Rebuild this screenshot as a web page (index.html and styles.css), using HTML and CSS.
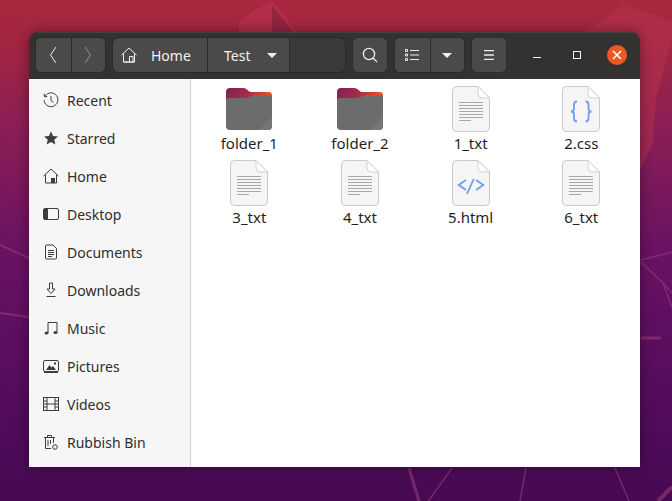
FILE: index.html
```html
<!DOCTYPE html>
<html lang="en">
<head>
  <meta charset="UTF-8" />
  <title>Test - Files</title>
  <link rel="stylesheet" href="styles.css">
</head>
<body>

  <svg class="wallpaper" viewBox="0 0 672 501" aria-hidden="true">
    <path d="M239 21 L272 0 L304 41 L239 41 Z" fill="#b8344e" opacity="0.55" />
    <path d="M272 6 L302 41 L272 41 Z" fill="#8a2040" opacity="0.7" />
    <path d="M574 39 L624 5 L672 21 L672 40 L656 97 L653 143 L640 170 L640 39 Z" fill="#b8344e" opacity="0.5" />
    <g fill="none" stroke="#a0407c" opacity="0.55">
      <path d="M641 260 L672 252 M641 262 L663 283 L672 293 M663 283 L672 307" stroke-width="1.500" />
      <path d="M641 338 L661 338" stroke-width="3" />
      <path d="M0 245 L29 258 M0 313 L29 317" stroke-width="2" />
      <path d="M409 468 L419 501" stroke-width="3" />
      <path d="M452 468 L422 510 M526 468 L520 501 M615 468 L629 501" stroke-width="1.500" />
      <path d="M672 487 L658 501" stroke-width="4" />
    </g>
  </svg>

  <div class="window">
    <header class="headerbar">
      <div class="btn-group">
        <button class="btn btn-half">
          <svg width="10" height="18" viewBox="0 0 10 18"><path d="M8 1 L2.500 9 L8 17" /></svg>
        </button>
        <button class="btn btn-half off">
          <svg width="10" height="18" viewBox="0 0 10 18"><path d="M2 1 L7.500 9 L2 17" /></svg>
        </button>
      </div>

      <div class="pathbar">
        <button class="crumb crumb-home">
          <svg width="16" height="16" viewBox="0 0 16 16"><path d="M0.500 8 L8 1 L15.500 8 M2.500 6.500 V15 H13.500 V6.500 M8.500 15 V9.500 H12 V15 M2.500 15 H13.500" /></svg>
          <span>Home</span>
        </button>
        <button class="crumb crumb-test">
          <span>Test</span>
          <i class="caret"></i>
        </button>
      </div>

      <button class="btn btn-single">
        <svg width="16" height="16" viewBox="0 0 16 16"><circle cx="7" cy="7" r="5.600" /><path d="M11 11 L15 15" /></svg>
      </button>

      <div class="btn-group">
        <button class="btn btn-half">
          <svg width="14" height="12" viewBox="0 0 14 12"><path d="M5 1.500 H14 M5 6 H14 M5 10.500 H14" /><path d="M0.500 0.500 H2.500 V2.500 H0.500 Z M0.500 5 H2.500 V7 H0.500 Z M0.500 9.500 H2.500 V11.500 H0.500 Z" /></svg>
        </button>
        <button class="btn btn-half"><i class="caret"></i></button>
      </div>

      <button class="btn btn-single">
        <svg width="12" height="10" viewBox="0 0 12 10"><path d="M1 0.500 H11 M1 5 H11 M1 9.500 H11" /></svg>
      </button>

      <div class="win-controls">
        <span class="win-btn"><i class="win-min"></i></span>
        <span class="win-btn"><i class="win-max"></i></span>
        <span class="win-btn win-close">
          <svg width="10" height="10" viewBox="0 0 10 10"><path d="M1 1 L9 9 M9 1 L1 9" /></svg>
        </span>
      </div>
    </header>

    <div class="main">
      <nav class="sidebar">
        <a class="side-item">
          <svg viewBox="0 0 16 16"><path d="M2.200 4 A6.900 6.900 0 1 1 1.100 8 M1.300 1.600 V4.600 H4.300 M8 4 V8.500 L10.500 10.500" /></svg>
          Recent
        </a>
        <a class="side-item">
          <svg viewBox="0 0 16 16"><path class="solid" d="M8 1.300 L10 6 L15 6.400 L11.200 9.700 L12.400 14.600 L8 12 L3.600 14.600 L4.800 9.700 L1 6.400 L6 6 Z" /></svg>
          Starred
        </a>
        <a class="side-item">
          <svg viewBox="0 0 16 16"><path d="M0.500 8 L8 1 L15.500 8 M2.500 6.500 V15 H13.500 V6.500" /><path class="solid" d="M8 10 H12 V15 H8 Z" /></svg>
          Home
        </a>
        <a class="side-item">
          <svg viewBox="0 0 16 16"><rect x="0.500" y="2.500" width="15" height="11" rx="1.500" /><path class="solid" d="M1 3 H5 V13 H1 Z" /></svg>
          Desktop
        </a>
        <a class="side-item">
          <svg viewBox="0 0 16 16"><path d="M2.500 2 Q2.500 1 3.500 1 H10 L13.500 4.500 V14 Q13.500 15 12.500 15 H3.500 Q2.500 15 2.500 14 Z M5 6.500 H11 M5 8.500 H11 M5 10.500 H11 M5 12.500 H9" /></svg>
          Documents
        </a>
        <a class="side-item">
          <svg viewBox="0 0 16 16"><path d="M6.500 1 H9.500 V7 H12 L8 11.500 L4 7 H6.500 Z M3.500 14.500 H12.500" /></svg>
          Downloads
        </a>
        <a class="side-item">
          <svg viewBox="0 0 16 16"><path d="M5 13 V2.500 H14 V12" /><ellipse class="solid" cx="3.500" cy="13" rx="2" ry="1.600" /><ellipse class="solid" cx="12.500" cy="12.500" rx="2" ry="1.600" /></svg>
          Music
        </a>
        <a class="side-item">
          <svg viewBox="0 0 16 16"><rect x="0.500" y="2.500" width="15" height="11" rx="1.500" /><path class="solid" d="M3 12 L6.500 7 L8.500 9.500 L10 8 L13 12 Z M11 4.500 H13 V6.500 H11 Z M1 13 H15 V15 H1 Z" /></svg>
          Pictures
        </a>
        <a class="side-item">
          <svg viewBox="0 0 16 16"><rect x="0.500" y="1.500" width="15" height="13" /><path d="M4 1.500 V14.500 M12 1.500 V14.500 M4 8 H12 M0.500 5 H4 M0.500 8 H4 M0.500 11 H4 M12 5 H15.500 M12 8 H15.500 M12 11 H15.500" /></svg>
          Videos
        </a>
        <a class="side-item">
          <svg viewBox="0 0 16 16"><path d="M1 3.500 H12 M4.500 3.500 V1.500 H8.500 V3.500 M2.500 3.500 V14.500 H8 M10.500 3.500 V9 M5 6 V12 M7.500 6 V10" /><circle cx="12" cy="13" r="2.300" /></svg>
          Rubbish Bin
        </a>
      </nav>

      <section class="files">
        <div class="file">
          <svg class="icon-folder" viewBox="0 1 46 42"><use href="#folder" /></svg>
          <span>folder_1</span>
        </div>
        <div class="file">
          <svg class="icon-folder" viewBox="0 1 46 42"><use href="#folder" /></svg>
          <span>folder_2</span>
        </div>
        <div class="file">
          <svg class="icon-doc" viewBox="0 0 38 46"><use href="#page" /><use href="#lines" /></svg>
          <span>1_txt</span>
        </div>
        <div class="file">
          <svg class="icon-doc" viewBox="0 0 38 46"><use href="#page" /><path class="code" d="M15 15.500 Q12 15.500 12 18.500 V22.500 Q12 25.500 9 25.500 Q12 25.500 12 28.500 V32.500 Q12 35.500 15 35.500 M23.500 15.500 Q26.500 15.500 26.500 18.500 V22.500 Q26.500 25.500 29.500 25.500 Q26.500 25.500 26.500 28.500 V32.500 Q26.500 35.500 23.500 35.500" /></svg>
          <span>2.css</span>
        </div>
        <div class="file">
          <svg class="icon-doc" viewBox="0 0 38 46"><use href="#page" /><use href="#lines" /></svg>
          <span>3_txt</span>
        </div>
        <div class="file">
          <svg class="icon-doc" viewBox="0 0 38 46"><use href="#page" /><use href="#lines" /></svg>
          <span>4_txt</span>
        </div>
        <div class="file">
          <svg class="icon-doc" viewBox="0 0 38 46"><use href="#page" /><path class="code" d="M14 20 L6.700 25 L14 30 M24 20 L31.300 25 L24 30 M21.700 19 L15 34" /></svg>
          <span>5.html</span>
        </div>
        <div class="file">
          <svg class="icon-doc" viewBox="0 0 38 46"><use href="#page" /><use href="#lines" /></svg>
          <span>6_txt</span>
        </div>
      </section>
    </div>
  </div>

  <svg class="defs" width="0" height="0" aria-hidden="true">
    <defs>
      <linearGradient id="folderTab" x1="0" x2="1" y1="0" y2="0.300">
        <stop offset="0" stop-color="#7c2152" />
        <stop offset="0.500" stop-color="#a62b48" />
        <stop offset="1" stop-color="#e85a22" />
      </linearGradient>
      <g id="folder">
        <path d="M0 5 Q0 1 4 1 H17 Q20 1 21.500 3 Q23 5 25 5 H43 Q46 5 46 8 V20 H0 Z" fill="url(#folderTab)" />
        <path d="M0 14 Q0 11 3 11 H20 Q23 11 25 9.500 Q27 8 30 8 H43 Q46 8 46 11 V39 Q46 43 42 43 H4 Q0 43 0 39 Z" fill="#6c6c6c" />
        <path d="M46 30 V39 Q46 43 42 43 H33 Z" fill="#767676" />
      </g>
      <g id="page">
        <path d="M4.500 0.500 H26 L37.500 12 V41 Q37.500 45.500 33 45.500 H5 Q0.500 45.500 0.500 41 V4.500 Q0.500 0.500 4.500 0.500 Z" fill="#f5f5f5" stroke="#c9c9c9" />
        <path d="M26 0.500 V8 Q26 12 30 12 H37.500 Z" fill="#ffffff" stroke="#d2d2d2" />
      </g>
      <g id="lines" stroke="#a8a8a8" stroke-width="1" fill="none">
        <path d="M7 16.500 H31 M7 19.500 H31 M7 22.500 H31 M7 25.500 H31 M7 28.500 H31 M7 31.500 H31 M7 34.500 H19" />
      </g>
    </defs>
  </svg>

</body>
</html>
```

FILE: styles.css
```css
* {
  box-sizing: border-box;
}

html, body {
  height: 100%;
}

body {
  margin: 0;
  padding: 32px 32px 34px 29px;
  overflow: hidden;
  font-family: "Noto Sans", sans-serif;
  background: linear-gradient(to bottom, #a8283f 0%, #a32640 8%, #8c1f55 25%, #6a1263 50%, #530c5c 80%, #470a52 100%);
}

.wallpaper {
  position: absolute;
  top: 0;
  left: 0;
  width: 672px;
  height: 501px;
}

.defs {
  position: absolute;
}

.window {
  position: relative;
  display: flex;
  flex-direction: column;
  width: 611px;
  height: 435px;
  border-radius: 9px 9px 0 0;
  overflow: hidden;
  box-shadow: 0 0 14px rgba(0,0,0,0.4);
}

.headerbar {
  display: flex;
  align-items: center;
  gap: 8px;
  flex: 0 0 47px;
  padding: 0 0 2px 7px;
  background: #333231;
  border-top: 1px solid #45413f;
}

button {
  border: none;
  padding: 0;
  margin: 0;
  color: #f2f2f2;
  font: inherit;
}

.headerbar svg path, .headerbar svg circle {
  fill: none;
  stroke: #ededed;
  stroke-width: 1;
}

.btn-group {
  display: flex;
  height: 34px;
  border-radius: 5px;
  overflow: hidden;
  background: #4b4a48;
  box-shadow: 0 0 0 1px #2b2a29;
}

.btn {
  display: flex;
  align-items: center;
  justify-content: center;
  height: 34px;
  background: #4b4a48;
}

.btn-group .btn + .btn {
  border-left: 1px solid #2b2a29;
}

.btn-half {
  width: 34.500px;
}

.btn-half.off svg {
  opacity: 0.45;
}

.btn-single {
  width: 34px;
  border-radius: 5px;
  box-shadow: 0 0 0 1px #2f2e2d;
}

.headerbar .btn-single svg path, .headerbar .btn-single svg circle {
  stroke-width: 1.300;
}

.pathbar {
  display: flex;
  width: 232px;
  height: 34px;
  border-radius: 6px;
  overflow: hidden;
  background: #3b3a39;
  box-shadow: 0 0 0 1px #2b2a29;
}

.crumb {
  display: flex;
  align-items: center;
  height: 34px;
  background: #4b4a48;
  font-size: 14px;
  border-right: 1px solid #2b2a29;
}

.crumb-home {
  width: 95px;
  padding-left: 8px;
}

.crumb-home span {
  margin-left: 14px;
}

.crumb-test {
  width: 82px;
  padding-left: 16px;
}

.crumb-test .caret {
  margin-left: 17px;
}

.caret {
  display: block;
  width: 0;
  height: 0;
  border-left: 5px solid transparent;
  border-right: 5px solid transparent;
  border-top: 5px solid #f0f0f0;
}

.win-controls {
  display: flex;
  align-items: center;
  margin-left: 3px;
}

.win-btn {
  display: flex;
  align-items: center;
  justify-content: center;
  width: 40px;
  height: 34px;
}

.win-min {
  display: block;
  width: 8px;
  height: 1px;
  margin-top: 4px;
  background: #f2f2f2;
}

.win-max {
  display: block;
  width: 8px;
  height: 8px;
  border: 1px solid #f2f2f2;
}

.win-close {
  width: 20px;
  height: 20px;
  margin-left: 10px;
  border-radius: 50%;
  background: #ec5a24;
}

.headerbar .win-close svg path {
  stroke: #ffffff;
  stroke-width: 1.500;
}

.main {
  display: flex;
  flex: 1;
  min-height: 0;
}

.sidebar {
  flex: 0 0 162px;
  padding-top: 3px;
  background: #f6f6f6;
  border-right: 1px solid #d5d5d5;
}

.side-item {
  display: flex;
  align-items: center;
  height: 38px;
  padding-left: 14px;
  padding-bottom: 2px;
  font-size: 14px;
  color: #2e2e2e;
}

.side-item svg {
  flex: 0 0 16px;
  width: 16px;
  height: 16px;
  margin-right: 8px;
}

.side-item svg path, .side-item svg circle, .side-item svg rect {
  fill: none;
  stroke: #3d3d3d;
  stroke-width: 1;
}

.side-item svg .solid {
  fill: #3d3d3d;
  stroke: none;
}

.files {
  flex: 1;
  display: grid;
  grid-template-columns: repeat(4, 110.670px);
  grid-auto-rows: 74px;
  align-content: start;
  padding: 7px 0 0 3px;
  background: #ffffff;
}

.file {
  display: flex;
  flex-direction: column;
  align-items: center;
  font-size: 15px;
  line-height: 18px;
  color: #1f1f1f;
}

.file svg {
  display: block;
  overflow: visible;
}

.icon-folder {
  width: 46px;
  height: 42px;
  margin: 2px 0;
}

.icon-doc {
  width: 38px;
  height: 46px;
}

.file span {
  margin-top: 2px;
}

.file .code {
  fill: none;
  stroke: #6f9cf5;
  stroke-width: 1.800;
}
```
